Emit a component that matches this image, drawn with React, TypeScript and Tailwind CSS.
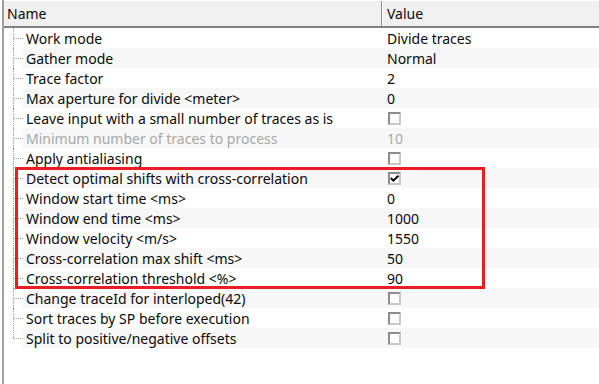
import React from "react";

type Row = {
  label: string;
  value?: string;
  check?: boolean;
  disabled?: boolean;
};

const rows: Row[] = [
  { label: "Work mode", value: "Divide traces" },
  { label: "Gather mode", value: "Normal" },
  { label: "Trace factor", value: "2" },
  { label: "Max aperture for divide <meter>", value: "0" },
  { label: "Leave input with a small number of traces as is", check: false },
  { label: "Minimum number of traces to process", value: "10", disabled: true },
  { label: "Apply antialiasing", check: false },
  { label: "Detect optimal shifts with cross-correlation", check: true },
  { label: "Window start time <ms>", value: "0" },
  { label: "Window end time <ms>", value: "1000" },
  { label: "Window velocity <m/s>", value: "1550" },
  { label: "Cross-correlation max shift <ms>", value: "50" },
  { label: "Cross-correlation threshold <%>", value: "90" },
  { label: "Change traceId for interloped(42)", check: false },
  { label: "Sort traces by SP before execution", check: false },
  { label: "Split to positive/negative offsets", check: false },
];

function Checkbox({ checked }: { checked: boolean }) {
  return (
    <div className="ml-px h-[13px] w-[13px] border-2 border-t-[#8c8c8c] border-l-[#8c8c8c] border-r-[#c8c8c8] border-b-[#c8c8c8] bg-white">
      {checked && (
        <svg viewBox="0 0 9 9" className="h-[9px] w-[9px]">
          <path d="M0.8 4 L3.4 6.6 L8.4 1.6" fill="none" stroke="#000" strokeWidth="2" />
        </svg>
      )}
    </div>
  );
}

export default function App() {
  return (
    <div className="relative h-[384px] w-[599px] overflow-hidden bg-white font-['Noto_Sans',sans-serif] text-[14px] text-[#0a0a0a]">
      <div className="ml-[2px] flex h-full flex-col border-l-2 border-[#a0a0a0]">
        {/* Header */}
        <div className="mt-px flex h-[27px] border-b-2 border-[#808080] bg-[#f0f0f0]">
          <div className="flex w-[378px] items-center border-r border-[#8a8a8a] pl-[3px]">Name</div>
          <div className="flex flex-1 items-center border-l border-[#fafafa] pl-[4px]">Value</div>
        </div>

        {/* Rows */}
        <div className="flex flex-col">
          {rows.map((r, i) => {
            const last = i === rows.length - 1;
            return (
              <div key={r.label} className="flex h-[20px]">
                <div className="relative w-[19px] shrink-0">
                  <div
                    className={
                      last
                        ? "absolute left-[9px] top-0 h-[11px] border-l border-dotted border-[#a0a0a0]"
                        : "absolute left-[9px] top-0 h-[20px] border-l border-dotted border-[#a0a0a0]"
                    }
                  />
                  <div className="absolute left-[10px] top-[10px] w-[9px] border-t border-dotted border-[#a0a0a0]" />
                </div>
                <div className={i % 2 === 1 ? "flex flex-1 bg-[#f7f7f7]" : "flex flex-1 bg-white"}>
                  <div
                    className={
                      r.disabled
                        ? "flex w-[359px] items-center whitespace-nowrap pl-[3px] text-[#a8a8a8]"
                        : "flex w-[359px] items-center whitespace-nowrap pl-[3px]"
                    }
                  >
                    {r.label}
                  </div>
                  <div
                    className={
                      r.disabled
                        ? "flex flex-1 items-center pl-[5px] text-[#a8a8a8]"
                        : "flex flex-1 items-center pl-[5px]"
                    }
                  >
                    {r.check !== undefined ? <Checkbox checked={r.check} /> : r.value}
                  </div>
                </div>
              </div>
            );
          })}
        </div>
      </div>

      {/* Highlight frame */}
      <div className="pointer-events-none absolute left-[15px] top-[167px] h-[122px] w-[470px] border-[3px] border-[#ed1c24]" />
    </div>
  );
}
